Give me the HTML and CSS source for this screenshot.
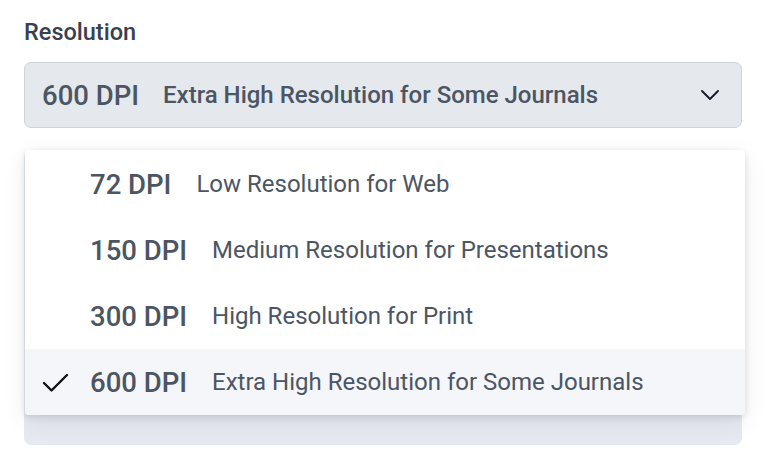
FILE: index.html
```html
<!DOCTYPE html>
<html>
<head>
<meta charset="utf-8">
<link rel="stylesheet" href="styles.css">
</head>
<body>
<div class="field">
  <div class="label">Resolution</div>
  <div class="select-wrap">
    <div class="select">
      <span class="dpi">600 DPI</span>
      <span class="desc">Extra High Resolution for Some Journals</span>
      <svg class="chev" width="18" height="10" viewBox="0 0 18 10"><path d="M1 1 L9 9 L17 1" fill="none" stroke="#111827" stroke-width="1.8" stroke-linecap="round" stroke-linejoin="round"/></svg>
    </div>
    <div class="next-field"></div>
    <ul class="menu">
      <li class="opt"><span class="check"></span><span class="dpi">72 DPI</span><span class="odesc">Low Resolution for Web</span></li>
      <li class="opt"><span class="check"></span><span class="dpi">150 DPI</span><span class="odesc">Medium Resolution for Presentations</span></li>
      <li class="opt"><span class="check"></span><span class="dpi">300 DPI</span><span class="odesc">High Resolution for Print</span></li>
      <li class="opt active"><span class="check"><svg width="28" height="20" viewBox="0 0 28 20"><path d="M2 10 L9.5 17.5 L25 2" fill="none" stroke="#111" stroke-width="2.4" stroke-linecap="round" stroke-linejoin="round"/></svg></span><span class="dpi">600 DPI</span><span class="odesc">Extra High Resolution for Some Journals</span></li>
    </ul>
  </div>
</div>
</body>
</html>
```
FILE: styles.css
```css
* { box-sizing: border-box; }
html, body { margin: 0; background: #fff; }
body {
  font-family: Roboto, "Noto Sans", sans-serif;
  color: #4b5563;
  padding: 18px 34px 0 24px;
}
.label {
  font-size: 23.5px;
  font-weight: 500;
  color: #374151;
  line-height: 28px;
}
.select-wrap {
  position: relative;
  margin-top: 16px;
}
.select {
  height: 66px;
  border: 1.5px solid #cdd3dc;
  background: #e5e8ed;
  border-radius: 7px;
  display: flex;
  align-items: center;
  padding: 0 20px 0 17px;
}
.select .dpi {
  font-size: 27.5px;
  font-weight: 500;
}
.select .desc {
  font-size: 24px;
  font-weight: 500;
  margin-left: 24px;
  flex: 1;
}
.chev { margin-right: 2px; }
.next-field {
  margin-top: 22px;
  height: 295px;
  background: #e6e9f0;
  border-radius: 7px;
}
.menu {
  position: absolute;
  top: 88px;
  left: 1px;
  right: -3px;
  margin: 0;
  padding: 1px 0 0;
  list-style: none;
  background: #fff;
  border-radius: 4px;
  box-shadow: 0 2px 6px rgba(17, 24, 39, 0.12), 0 6px 24px rgba(17, 24, 39, 0.08);
  overflow: hidden;
}
.opt {
  height: 66px;
  display: flex;
  align-items: center;
}
.opt.active { background: #f5f6fa; }
.check {
  width: 65px;
  display: flex;
  justify-content: flex-end;
  padding-right: 20px;
  align-items: center;
}
.check svg { display: block; margin-top: 1px; }
.opt .dpi {
  font-size: 27.5px;
  font-weight: 500;
}
.opt .odesc {
  font-size: 24px;
  font-weight: 400;
  margin-left: 25px;
}
```
